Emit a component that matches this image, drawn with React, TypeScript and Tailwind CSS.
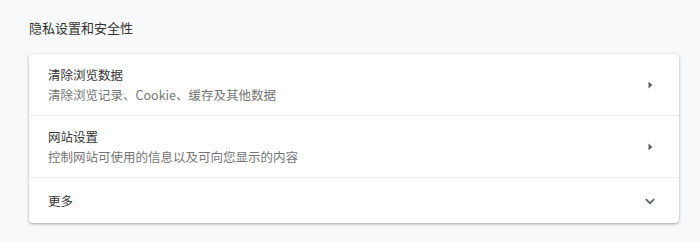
import React from "react";

const font = { fontFamily: '"Noto Sans CJK SC", "Noto Sans", sans-serif' };

function Tri() {
  return (
    <svg width="24" height="24" viewBox="0 0 24 24">
      <path d="M10.5 8.5 L14.5 12 L10.5 15.5 Z" fill="#5f6368" />
    </svg>
  );
}

function Chevron() {
  return (
    <svg width="24" height="24" viewBox="0 0 24 24">
      <path d="M7.8 10.2 L12 14.2 L16.2 10.2" fill="none" stroke="#5f6368" strokeWidth="1.8" />
    </svg>
  );
}

export default function App() {
  return (
    <div className="w-[700px] h-[242px] bg-[#f8f9fa] pl-[29px] pr-[21px] pt-[18px] text-[13px]" style={font}>
      <div className="leading-[20px] text-[#333333]">隐私设置和安全性</div>
      <div className="mt-[16px] bg-white rounded-[4px] shadow-[0_1px_2px_rgba(60,64,67,0.3),0_1px_3px_1px_rgba(60,64,67,0.12)] text-[12.5px]">
        <div className="h-[62px] flex items-center pl-[19px] pr-[17px] border-b border-[#e8eaed]">
          <div className="flex-1 leading-[20px]">
            <div className="text-[#333333]">清除浏览数据</div>
            <div className="text-[#757575]">清除浏览记录、Cookie、缓存及其他数据</div>
          </div>
          <Tri />
        </div>
        <div className="h-[62px] flex items-center pl-[19px] pr-[17px] border-b border-[#e8eaed]">
          <div className="flex-1 leading-[20px]">
            <div className="text-[#333333]">网站设置</div>
            <div className="text-[#757575]">控制网站可使用的信息以及可向您显示的内容</div>
          </div>
          <Tri />
        </div>
        <div className="h-[45px] flex items-center pl-[19px] pr-[17px]">
          <div className="flex-1 leading-[20px] text-[#333333]">更多</div>
          <Chevron />
        </div>
      </div>
    </div>
  );
}
